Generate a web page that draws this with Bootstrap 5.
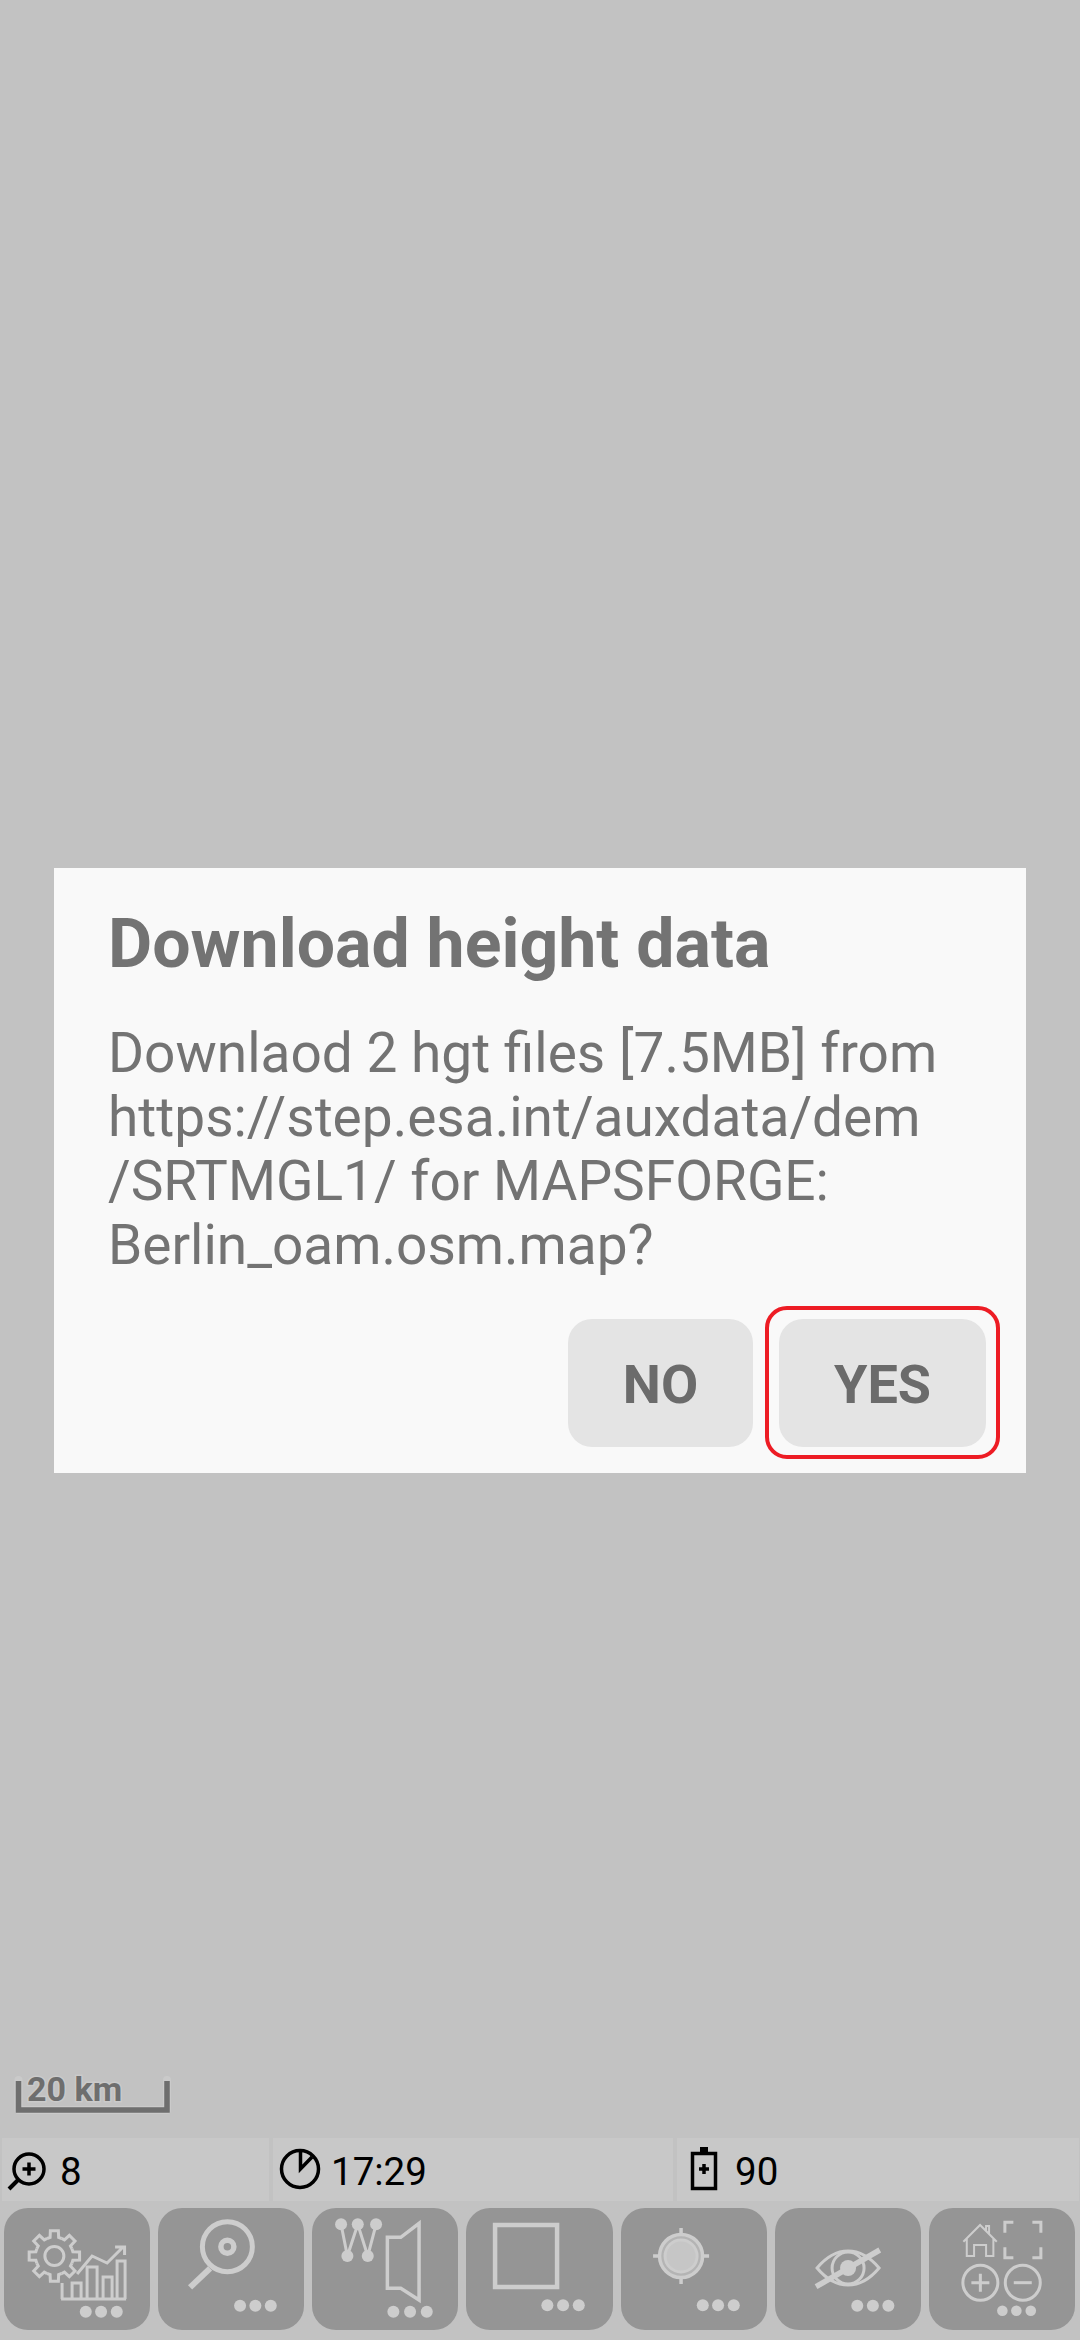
<!DOCTYPE html>
<html lang="en">
<head>
<meta charset="utf-8">
<title>Download height data</title>
<link href="https://cdn.jsdelivr.net/npm/bootstrap@5.3.0/dist/css/bootstrap.min.css" rel="stylesheet">
<style>
html, body { height: 100%; }
body { background: #c2c2c2; font-family: Roboto, "Liberation Sans", sans-serif; overflow: hidden; }
.screen-wrap { height: 2340px; padding-bottom: 10px; }
.scale-svg { display: block; margin: 0 0 20px 12px; width: 175px; height: 55px; }
.scale-svg text { font: 700 34px Roboto, sans-serif; fill: #6e6e6e; stroke: #cacaca; stroke-width: 3px; paint-order: stroke; }
.status-strip { display: grid; grid-template-columns: 267px 400px 402px; gap: 4px; padding: 0 1px 0 2px; margin-bottom: 7px; }
.status-cell { height: 63px; background: #c8c8c8; color: #000; font-size: 38.5px; line-height: 68px; }
.status-cell svg { flex: none; display: block; }
.tool-strip { display: flex; gap: 8px; padding: 0 5px 0 4px; }
.tool-btn { flex: 1 1 0; height: 122px; padding: 0; border: 0; border-radius: 24px; background: #959595; display: block; }
.tool-btn svg { display: block; width: 100%; height: 122px; }
.ic { fill: none; stroke: #cdcdcd; stroke-width: 3; }
.ic.sw2 { stroke-width: 2; }
.ic.sw35 { stroke-width: 3.5; }
.ic.sw45 { stroke-width: 4.5; }
.ic.sw5 { stroke-width: 5; }
.ic.sw55 { stroke-width: 5.5; }
.ic.sw6 { stroke-width: 6; }
.ic.halo-fill { fill: #b4b4b4; }
.dot { fill: #cdcdcd; }
.height-dialog { width: 972px; max-width: 972px; margin: 0 auto; }
.height-dialog .modal-content { background: #f9f9f9; border: 0; border-radius: 0; padding: 36px 40px 26px 54px; color: #737373; height: 605px; box-shadow: none; }
.dlg-title { font-size: 68px; line-height: 80px; font-weight: 700; margin: 0 0 37px; color: #737373; }
.dlg-text { font-size: 55px; line-height: 64px; margin: 0; }
.dlg-actions { display: flex; justify-content: flex-end; gap: 26px; margin-top: auto; }
.dlg-btn { height: 128px; border: 0; border-radius: 24px; background: #e4e4e4; color: #6b6b6b; font-size: 54px; font-weight: 700; line-height: 1; padding: 5px 0 0; position: relative; }
.dlg-btn:hover, .dlg-btn:active { background: #e4e4e4; color: #6b6b6b; }
.dlg-no { width: 185px; }
.dlg-yes { width: 207px; }
.dlg-yes::after { content: ""; position: absolute; inset: -13px -14px -12px -14px; border: 4.5px solid #ed1c24; border-radius: 22px; }
</style>
</head>
<body>
<div class="screen-wrap d-flex flex-column justify-content-end">
  <svg class="scale-svg" viewBox="0 -10 175 55">
    <path d="M6.5 7V37H155V7" fill="none" stroke="#cacaca" stroke-width="8" stroke-linejoin="round" stroke-linecap="round"/>
    <path d="M6.5 8V37H155V8" fill="none" stroke="#6e6e6e" stroke-width="5.500"/>
    <text x="15" y="28">20 km</text>
  </svg>

  <div class="status-strip">
    <div class="status-cell d-flex">
      <svg width="58" height="63" viewBox="0 0 58 63"><circle cx="27" cy="31" r="15" fill="none" stroke="#000" stroke-width="3.500"/><path d="M20.500 31H33.500M27 24.500V37.500" stroke="#000" stroke-width="3.500"/><path d="M16 42L7 51" stroke="#000" stroke-width="4"/></svg>
      <span>8</span>
    </div>
    <div class="status-cell d-flex">
      <svg width="58" height="63" viewBox="0 0 58 63"><circle cx="27" cy="31" r="18.500" fill="none" stroke="#000" stroke-width="3.500"/><path d="M27.500 14V31L39 19" fill="none" stroke="#000" stroke-width="3.500"/></svg>
      <span>17:29</span>
    </div>
    <div class="status-cell d-flex">
      <svg width="58" height="63" viewBox="0 0 58 63"><rect x="15.500" y="15.500" width="23" height="35" fill="none" stroke="#000" stroke-width="3.500"/><rect x="23" y="9" width="8" height="6"/><path d="M22 31H32M27 26V36" stroke="#000" stroke-width="3.500"/></svg>
      <span>90</span>
    </div>
  </div>

  <div class="tool-strip">
    <button type="button" class="btn tool-btn" aria-label="Settings">
      <svg viewBox="0 0 146 122">
        <defs><path id="gearseg" d="M-7.270-17.550L-4.270-18.500L-4-25.200L4-25.200L4.270-18.500L7.270-17.550"/></defs>
        <g class="ic" transform="translate(50.300 48)">
          <use href="#gearseg"/><use href="#gearseg" transform="rotate(45)"/><use href="#gearseg" transform="rotate(90)"/><use href="#gearseg" transform="rotate(135)"/><use href="#gearseg" transform="rotate(180)"/><use href="#gearseg" transform="rotate(225)"/><use href="#gearseg" transform="rotate(270)"/><use href="#gearseg" transform="rotate(315)"/>
          <circle r="9.500"/>
        </g>
        <path class="ic" d="M58 75V91M57 91H122M68 91V75H77V91M83 91V59H93V91M99 91V69H108V91M113 91V53H121V91"/>
        <path class="ic" d="M73 66L88 48L103 55L119 39M111 39H120.500V47"/>
        <circle class="dot" cx="81.700" cy="103.700" r="6"/><circle class="dot" cx="97" cy="103.700" r="6"/><circle class="dot" cx="112.700" cy="103.700" r="6"/>
      </svg>
    </button>
    <button type="button" class="btn tool-btn" aria-label="Search">
      <svg viewBox="0 0 146 122">
        <circle class="ic sw5" cx="69.300" cy="38.700" r="25"/>
        <circle class="ic sw55" cx="69.300" cy="38.700" r="6.500"/>
        <path class="ic sw6" d="M52 60.300L32 79.300"/>
        <circle class="dot" cx="82" cy="97.700" r="6"/><circle class="dot" cx="97.300" cy="97.700" r="6"/><circle class="dot" cx="112.700" cy="97.700" r="6"/>
      </svg>
    </button>
    <button type="button" class="btn tool-btn" aria-label="Waypoints and routes">
      <svg viewBox="0 0 146 122">
        <path class="ic" d="M29 16.300L35.300 48L45.700 16.300L55.700 48L64 16.300"/>
        <circle class="dot" cx="29" cy="16.300" r="6"/><circle class="dot" cx="45.700" cy="16.300" r="6"/><circle class="dot" cx="64" cy="16.300" r="6"/><circle class="dot" cx="35.300" cy="48" r="6"/><circle class="dot" cx="55.700" cy="48" r="6"/>
        <path class="ic sw35" d="M75.300 29.300H88.700L107 15.300V92L88.700 80.300H75.300Z"/>
        <circle class="dot" cx="81.300" cy="103.700" r="6"/><circle class="dot" cx="98" cy="103.700" r="6"/><circle class="dot" cx="114.700" cy="103.700" r="6"/>
      </svg>
    </button>
    <button type="button" class="btn tool-btn" aria-label="Map">
      <svg viewBox="0 0 146 122">
        <rect class="ic sw45" x="29" y="17" width="62" height="62"/>
        <circle class="dot" cx="81.300" cy="97.300" r="6"/><circle class="dot" cx="97" cy="97.300" r="6"/><circle class="dot" cx="112.700" cy="97.300" r="6"/>
      </svg>
    </button>
    <button type="button" class="btn tool-btn" aria-label="Position">
      <svg viewBox="0 0 146 122">
        <circle class="ic sw35 halo-fill" cx="60" cy="48" r="21.500"/>
        <circle cx="60" cy="48" r="16" fill="#c6c6c6" stroke="#cdcdcd" stroke-width="3"/>
        <path class="ic sw35" d="M60 20V26M60 70V76M32 48H38M82 48H88"/>
        <circle class="dot" cx="81.700" cy="97.300" r="6"/><circle class="dot" cx="97" cy="97.300" r="6"/><circle class="dot" cx="112.700" cy="97.300" r="6"/>
      </svg>
    </button>
    <button type="button" class="btn tool-btn" aria-label="Visibility">
      <svg viewBox="0 0 146 122">
        <path class="ic" d="M42 60C52 48 62 43 73 43C84 43 94 48 104 60C94 72 84 77 73 77C62 77 52 72 42 60Z"/>
        <circle class="ic" cx="73" cy="60" r="16"/>
        <circle class="dot" cx="73" cy="60" r="8"/>
        <path class="ic sw55" d="M41 78.700L104.700 42"/>
        <circle class="dot" cx="82.200" cy="97.700" r="6"/><circle class="dot" cx="97.800" cy="97.700" r="6"/><circle class="dot" cx="113.300" cy="97.700" r="6"/>
      </svg>
    </button>
    <button type="button" class="btn tool-btn" aria-label="Home and zoom">
      <svg viewBox="0 0 146 122">
        <path class="ic sw2" d="M34.300 33.700L51 17L67.700 33.700M37.700 31V48H45V37H57V48H64.300V31M57 23V18H60V26"/>
        <path class="ic" d="M84.300 14.200H75.800V24.700M103.300 14.200H111.800V24.700M75.800 39.300V49.800H84.300M111.800 39.300V49.800H103.300"/>
        <circle class="ic" cx="51.300" cy="74.700" r="17.500"/><path class="ic" d="M42.300 74.700H60.300M51.300 65.700V83.700"/>
        <circle class="ic" cx="93.700" cy="74.700" r="17.500"/><path class="ic" d="M84.700 74.700H102.700"/>
        <circle class="dot" cx="73.300" cy="102.700" r="5.300"/><circle class="dot" cx="87.300" cy="102.700" r="5.300"/><circle class="dot" cx="101.700" cy="102.700" r="5.300"/>
      </svg>
    </button>
  </div>
</div>

<div class="modal d-flex align-items-center overflow-hidden" tabindex="-1">
  <div class="height-dialog">
    <div class="modal-content d-flex flex-column">
      <h5 class="dlg-title">Download height data</h5>
      <p class="dlg-text">Downlaod 2 hgt files [7.5MB] from<br>https://step.esa.int/auxdata/dem<br>/SRTMGL1/ for MAPSFORGE:<br>Berlin_oam.osm.map?</p>
      <div class="dlg-actions">
        <button type="button" class="btn dlg-btn dlg-no">NO</button>
        <button type="button" class="btn dlg-btn dlg-yes">YES</button>
      </div>
    </div>
  </div>
</div>
<script src="https://cdn.jsdelivr.net/npm/bootstrap@5.3.0/dist/js/bootstrap.bundle.min.js"></script>
</body>
</html>
